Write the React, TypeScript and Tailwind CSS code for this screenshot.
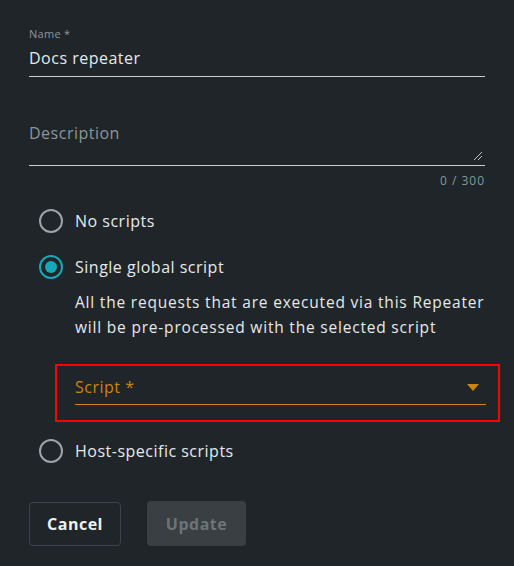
import { useState } from "react"

function Radio({ checked }: { checked: boolean }) {
  return checked ? (
    <span className="flex h-6 w-6 shrink-0 items-center justify-center rounded-full border-2 border-[#17a7b8]">
      <span className="h-3 w-3 rounded-full bg-[#17a7b8]" />
    </span>
  ) : (
    <span className="h-6 w-6 shrink-0 rounded-full border-2 border-[#9ba4a9]" />
  )
}

export default function App() {
  const [mode, setMode] = useState("single")

  const options = [
    { id: "none", label: "No scripts" },
    { id: "single", label: "Single global script" },
    { id: "host", label: "Host-specific scripts" },
  ]

  return (
    <div className="min-h-[566px] w-full bg-[#1f2528] px-[29px] pt-[27px] tracking-[0.5px] text-[#e6e9ea]" style={{ fontFamily: "'Open Sans', 'Noto Sans', sans-serif" }}>
      <div className="flex flex-col">
        <label className="text-[11px] leading-[14px] tracking-[0.3px] text-[#8b969b]">Name *</label>
        <div className="mt-[6px] border-b border-[#c9cdcf] pb-[7px] text-[16px] leading-[22px]">Docs repeater</div>
      </div>

      <div className="mt-[44px] flex flex-col">
        <div className="relative h-[45px] border-b border-[#c9cdcf]">
          <span className="text-[16px] leading-[22px] text-[#8b969b]">Description</span>
          <svg className="absolute bottom-[4px] right-[2px]" width="10" height="10" viewBox="0 0 10 10">
            <path d="M1 9L9 1M5 9L9 5" stroke="#bfc4c6" strokeWidth="1" />
          </svg>
        </div>
        <div className="mt-[7px] text-right text-[12px] leading-[16px] tracking-[1px] text-[#8b969b]">0 / 300</div>
      </div>

      <div className="mt-[9px] flex flex-col pl-[10px]">
        {options.map(o => (
          <div key={o.id} className="flex flex-col">
            <button onClick={() => setMode(o.id)} className="flex h-[46px] items-center gap-[12px] text-left text-[16px]">
              <Radio checked={mode === o.id} />
              <span>{o.label}</span>
            </button>
            {o.id === "single" && mode === "single" && (
              <div className="flex flex-col pl-[36px]">
                <p className="text-[15.5px] leading-[25px] tracking-[0.8px]">
                  All the requests that are executed via this Repeater
                  <br />
                  will be pre-processed with the selected script
                </p>
                <div className="ml-[-20px] mr-[-15px] mt-[24px] mb-[6px] border-2 border-[#ff0000] pl-[18px] pr-[12px] pt-[10px] pb-[15px]">
                  <div className="flex items-center justify-between border-b border-[#c8860d] pb-[6px]">
                    <span className="text-[16px] leading-[22px] text-[#c8860d]">Script *</span>
                    <svg width="12" height="7" viewBox="0 0 12 7" className="mr-[7px]">
                      <path d="M0 0H12L6 7Z" fill="#c8860d" />
                    </svg>
                  </div>
                </div>
              </div>
            )}
          </div>
        ))}
      </div>

      <div className="mt-[27px] flex items-center gap-[26px]">
        <button className="h-[44px] w-[92px] rounded-[4px] border border-[#3b4248] text-[16px] font-bold text-[#eef0f1]">Cancel</button>
        <button disabled className="h-[45px] w-[99px] rounded-[4px] bg-[#3a3f43] text-[16px] font-bold text-[#6d7478]">Update</button>
      </div>
    </div>
  )
}
